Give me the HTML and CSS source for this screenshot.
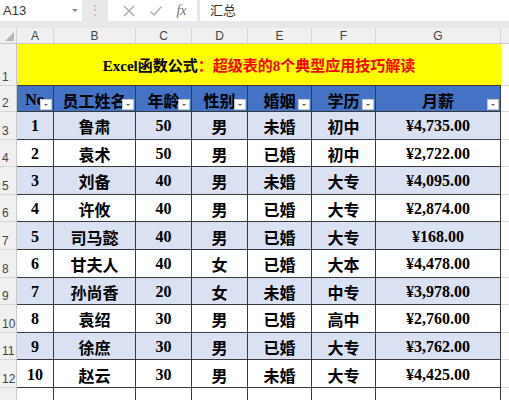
FILE: index.html
```html
<!DOCTYPE html>
<html lang="zh">
<head>
<meta charset="utf-8">
<link rel="stylesheet" href="styles.css">
</head>
<body>
<div class="fbar">
  <div class="namebox"><span>A13</span><span class="nb-arrow"></span></div>
  <div class="sep">⋮</div>
  <div class="tools">
    <svg class="ic" width="14" height="14" viewBox="0 0 14 14"><path d="M2 2 L12 12 M12 2 L2 12" stroke="#a8a8a8" stroke-width="1.3" fill="none"/></svg>
    <svg class="ic" width="14" height="14" viewBox="0 0 14 14"><path d="M1.5 7.5 L5 11 L12.5 2.5" stroke="#a8a8a8" stroke-width="1.3" fill="none"/></svg>
    <span class="fx">fx</span>
  </div>
  <div class="finput">汇总</div>
</div>
<div class="sheet">
  <div class="corner"><span class="tri"></span></div>
  <div class="ch">A</div><div class="ch">B</div><div class="ch">C</div><div class="ch">D</div><div class="ch">E</div><div class="ch">F</div><div class="ch">G</div><div class="ch ch-h"></div>

  <div class="rh">1</div>
  <div class="title"><span class="t-black">Excel函数公式</span><span class="t-red">：超级表的8个典型应用技巧解读</span></div>
  <div class="hc"></div>

  <div class="rh">2</div>
  <div class="hd">No<span class="flt"></span></div>
  <div class="hd">员工姓名<span class="flt"></span></div>
  <div class="hd">年龄<span class="flt"></span></div>
  <div class="hd">性别<span class="flt"></span></div>
  <div class="hd">婚姻<span class="flt"></span></div>
  <div class="hd">学历<span class="flt"></span></div>
  <div class="hd">月薪<span class="flt"></span></div>
  <div class="hc"></div>

  <div class="rh">3</div><div class="c b">1</div><div class="c b">鲁肃</div><div class="c b">50</div><div class="c b">男</div><div class="c b">未婚</div><div class="c b">初中</div><div class="c b">¥4,735.00</div><div class="hc"></div>
  <div class="rh">4</div><div class="c">2</div><div class="c">袁术</div><div class="c">50</div><div class="c">男</div><div class="c">已婚</div><div class="c">初中</div><div class="c">¥2,722.00</div><div class="hc"></div>
  <div class="rh">5</div><div class="c b">3</div><div class="c b">刘备</div><div class="c b">40</div><div class="c b">男</div><div class="c b">未婚</div><div class="c b">大专</div><div class="c b">¥4,095.00</div><div class="hc"></div>
  <div class="rh">6</div><div class="c">4</div><div class="c">许攸</div><div class="c">40</div><div class="c">男</div><div class="c">已婚</div><div class="c">大专</div><div class="c">¥2,874.00</div><div class="hc"></div>
  <div class="rh">7</div><div class="c b">5</div><div class="c b">司马懿</div><div class="c b">40</div><div class="c b">男</div><div class="c b">已婚</div><div class="c b">大专</div><div class="c b">¥168.00</div><div class="hc"></div>
  <div class="rh">8</div><div class="c">6</div><div class="c">甘夫人</div><div class="c">40</div><div class="c">女</div><div class="c">已婚</div><div class="c">大本</div><div class="c">¥4,478.00</div><div class="hc"></div>
  <div class="rh">9</div><div class="c b">7</div><div class="c b">孙尚香</div><div class="c b">20</div><div class="c b">女</div><div class="c b">未婚</div><div class="c b">中专</div><div class="c b">¥3,978.00</div><div class="hc"></div>
  <div class="rh">10</div><div class="c">8</div><div class="c">袁绍</div><div class="c">30</div><div class="c">男</div><div class="c">已婚</div><div class="c">高中</div><div class="c">¥2,760.00</div><div class="hc"></div>
  <div class="rh">11</div><div class="c b">9</div><div class="c b">徐庶</div><div class="c b">30</div><div class="c b">男</div><div class="c b">已婚</div><div class="c b">大专</div><div class="c b">¥3,762.00</div><div class="hc"></div>
  <div class="rh">12</div><div class="c">10</div><div class="c">赵云</div><div class="c">30</div><div class="c">男</div><div class="c">未婚</div><div class="c">大专</div><div class="c">¥4,425.00</div><div class="hc"></div>
  <div class="rh">13</div><div class="c tot">汇总</div><div class="c"></div><div class="c"></div><div class="c"></div><div class="c"></div><div class="c"></div><div class="c"></div><div class="hc"></div>
</div>
</body>
</html>
```

FILE: styles.css
```css
html, body {
  margin: 0;
  padding: 0;
  background: #ffffff;
  width: 509px;
  height: 400px;
  overflow: hidden;
}

.fbar {
  display: flex;
  align-items: flex-start;
  height: 28px;
  background: #e8e8e8;
  font-family: "Liberation Sans", "Noto Sans CJK SC", sans-serif;
  font-size: 13px;
  color: #333;
}

.namebox {
  width: 82px;
  height: 21px;
  background: #fff;
  display: flex;
  align-items: center;
  justify-content: space-between;
  padding: 0 4px 0 3px;
  box-sizing: border-box;
}

.nb-arrow {
  width: 0;
  height: 0;
  border-left: 3px solid transparent;
  border-right: 3px solid transparent;
  border-top: 3px solid #888;
}

.sep {
  width: 26px;
  height: 21px;
  text-align: center;
  line-height: 21px;
  color: #b0b0b0;
  font-size: 12px;
}

.tools {
  width: 89px;
  height: 21px;
  background: #fff;
  display: flex;
  align-items: center;
  justify-content: space-around;
  padding: 0 4px 0 8px;
  box-sizing: border-box;
}

.fx {
  font-family: "Liberation Serif", serif;
  font-style: italic;
  font-size: 14px;
  color: #777;
}

.finput {
  flex: 1;
  margin-left: 3px;
  height: 21px;
  background: #fff;
  line-height: 21px;
  padding-left: 10px;
  color: #333;
}

.sheet {
  display: grid;
  grid-template-columns: 17px 37px 82px 56px 56px 64px 64px 125px 1fr;
  grid-template-rows: 16px 42px 26px repeat(10, 27.6px) 28px;
  font-family: "Liberation Serif", "Noto Sans CJK SC", serif;
}

.corner {
  background: #f0f0f0;
  border-right: 1px solid #d0d0d0;
  border-bottom: 1px solid #c8c8c8;
  box-sizing: border-box;
  position: relative;
}

.tri {
  position: absolute;
  right: 2px;
  bottom: 2px;
  width: 0;
  height: 0;
  border-left: 9px solid transparent;
  border-bottom: 9px solid #b8b8b8;
}

.ch {
  background: #f0f0f0;
  border-right: 1px solid #d4d4d4;
  border-bottom: 1px solid #c8c8c8;
  box-sizing: border-box;
  font-family: "Liberation Sans", sans-serif;
  font-size: 12px;
  color: #444;
  display: flex;
  align-items: center;
  justify-content: center;
}

.ch-h {
  border-right: none;
}

.rh {
  background: #f0f0f0;
  border-right: 1px solid #c8c8c8;
  border-bottom: 1px solid #d4d4d4;
  box-sizing: border-box;
  font-family: "Liberation Sans", sans-serif;
  font-size: 12px;
  color: #444;
  display: flex;
  align-items: flex-end;
  justify-content: flex-start;
  padding: 0 0 1px 2px;
}

.title {
  grid-column: span 7;
  background: #ffff00;
  border-bottom: 1px solid #3a3a3a;
  box-sizing: border-box;
  display: flex;
  align-items: center;
  justify-content: center;
  font-size: 15px;
  font-weight: bold;
}

.t-black { color: #000; }
.t-red { color: #ff0000; }

.hc {
  border-bottom: 1px solid #d9d9d9;
  box-sizing: border-box;
}

.hd {
  position: relative;
  background: #4472c4;
  border-right: 1px solid #2f3b55;
  border-bottom: 1px solid #3a3a3a;
  box-sizing: border-box;
  display: flex;
  align-items: center;
  justify-content: center;
  padding-top: 3px;
  font-size: 16px;
  font-weight: bold;
  color: #000;
  overflow: hidden;
  white-space: nowrap;
}

.flt {
  position: absolute;
  right: 1px;
  bottom: 1px;
  width: 12px;
  height: 11px;
  background: #fff;
  box-sizing: border-box;
  border: 1px solid #c6c6c6;
}

.flt::after {
  content: "";
  position: absolute;
  left: 3px;
  top: 4px;
  width: 0;
  height: 0;
  border-left: 2px solid transparent;
  border-right: 2px solid transparent;
  border-top: 2px solid #666;
}

.c {
  background: #ffffff;
  border-right: 1px solid #3a3a3a;
  border-bottom: 1px solid #3a3a3a;
  box-sizing: border-box;
  display: flex;
  align-items: center;
  justify-content: center;
  padding-top: 2px;
  font-size: 16px;
  font-weight: bold;
  color: #000;
  white-space: nowrap;
}

.c.b {
  background: #d9e1f2;
}

.c.tot {
  align-items: flex-start;
  padding-top: 9px;
}
```
